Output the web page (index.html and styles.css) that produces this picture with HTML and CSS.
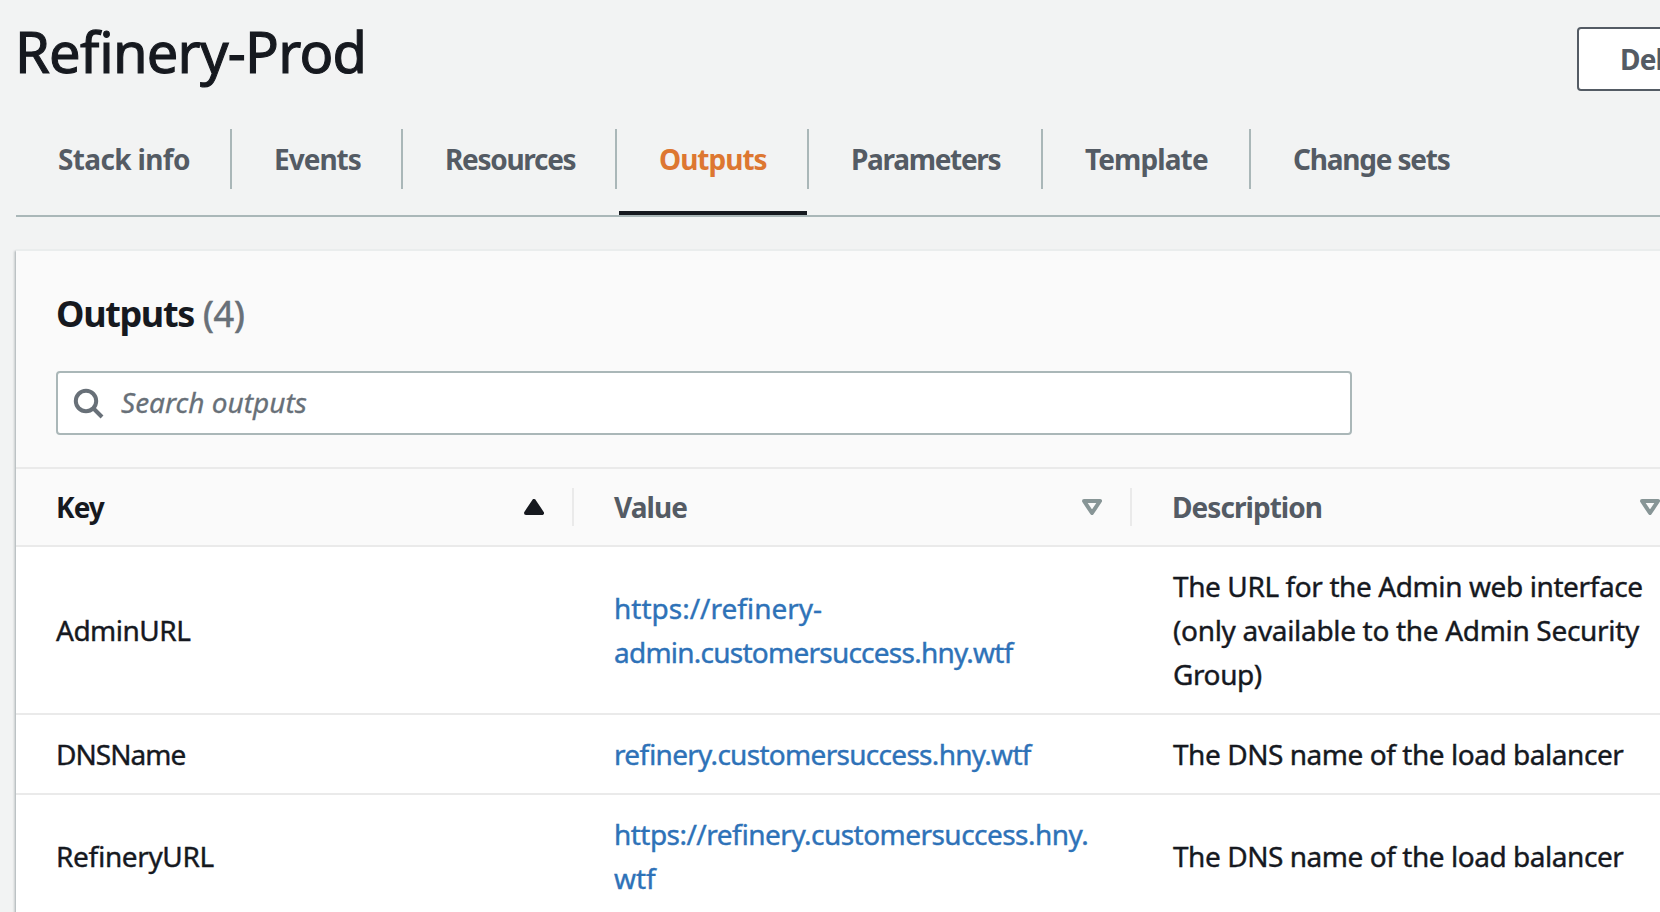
FILE: index.html
```html
<!DOCTYPE html>
<html lang="en">
<head>
<meta charset="utf-8">
<title>Refinery-Prod</title>
<link rel="stylesheet" href="styles.css">
</head>
<body>
<main class="page">
  <header class="page-header">
    <h1 class="title">Refinery-Prod</h1>
    <button class="button">Delete</button>
  </header>
  <nav class="tabs">
    <a class="tab tab-info"><span>Stack info</span></a>
    <a class="tab tab-events"><span>Events</span></a>
    <a class="tab tab-resources"><span>Resources</span></a>
    <a class="tab tab-outputs active"><span>Outputs</span></a>
    <a class="tab tab-parameters"><span>Parameters</span></a>
    <a class="tab tab-template"><span>Template</span></a>
    <a class="tab tab-changes"><span>Change sets</span></a>
  </nav>
  <section class="panel">
    <div class="panel-header">
      <h2 class="heading">Outputs <span class="count">(4)</span></h2>
      <div class="search">
        <svg class="search-icon" width="32" height="32" viewBox="0 0 32 32" fill="none" stroke="#687078" stroke-width="4"><circle cx="13" cy="13" r="10.2"/><path d="M20 20l9 9"/></svg>
        <span class="placeholder">Search outputs</span>
      </div>
    </div>
    <div class="row head">
      <div class="th sorted"><span>Key</span><svg width="20" height="16" viewBox="0 0 20 16"><path d="M10 2L18 14H2z" fill="#16191f" stroke="#16191f" stroke-width="4" stroke-linejoin="round"/></svg></div>
      <div class="th"><span>Value</span><svg width="20" height="16" viewBox="0 0 20 16"><path d="M10 14L18 2H2z" fill="none" stroke="#879596" stroke-width="4" stroke-linejoin="round"/></svg></div>
      <div class="th"><span>Description</span><svg width="20" height="16" viewBox="0 0 20 16"><path d="M10 14L18 2H2z" fill="none" stroke="#879596" stroke-width="4" stroke-linejoin="round"/></svg></div>
    </div>
    <div class="row">
      <div class="td name">AdminURL</div>
      <div class="td link"><a><span class="loose">https://refinery-</span><br><span class="tight">admin.customersuccess.hny.wtf</span></a></div>
      <div class="td">The URL for the Admin web interface<br><span class="wide">(only available to the Admin Security</span><br>Group)</div>
    </div>
    <div class="row">
      <div class="td name-tight">DNSName</div>
      <div class="td link"><a>refinery.customersuccess.hny.wtf</a></div>
      <div class="td balance">The DNS name of the load balancer</div>
    </div>
    <div class="row">
      <div class="td">RefineryURL</div>
      <div class="td link"><a><span class="host">https://refinery.customersuccess.hny.</span><br><span class="loose">wtf</span></a></div>
      <div class="td balance">The DNS name of the load balancer</div>
    </div>
  </section>
</main>
</body>
</html>
```
FILE: styles.css
```css
* { box-sizing: border-box; }
body {
  margin: 0;
  height: 912px;
  overflow: hidden;
  background: #f2f3f3;
  color: #16191f;
  font: 28px/44px "Noto Sans", "Open Sans", sans-serif;
  font-feature-settings: "liga" 1;
}
.page { width: 1780px; padding: 18px 0 0 16px; }
.page-header { display: flex; height: 111px; }
.title {
  width: 1561px;
  margin: 0;
  padding-top: 1px;
  font-size: 56px;
  font-weight: 400;
  line-height: 64px;
  letter-spacing: -0.75px;
  text-indent: -1px;
  -webkit-text-stroke: 1.1px #16191f;
}
.button {
  width: 160px;
  height: 64px;
  margin: 9px 0 0;
  padding: 0 0 0 41px;
  border: 2px solid #545b64;
  border-radius: 4px;
  background: #fff;
  color: #545b64;
  font: 700 28px/58px "Noto Sans", sans-serif;
  letter-spacing: -0.8px;
  text-align: left;
}

/* Tabs */
.tabs { display: flex; height: 88px; border-bottom: 2px solid #aab7b8; }
.tab {
  position: relative;
  flex: none;
  height: 60px;
  padding-left: 42px;
  border-right: 2px solid #aab7b8;
  color: #545b64;
  font-weight: 700;
  line-height: 60px;
  letter-spacing: -1px;
  white-space: nowrap;
}
.tab-info { width: 216px; letter-spacing: -0.65px; }
.tab-events { width: 171px; }
.tab-resources { width: 214px; letter-spacing: -1.3px; }
.tab-outputs { width: 192px; padding-left: 42px; }
.tab-parameters { width: 234px; letter-spacing: -1.3px; }
.tab-template { width: 208px; padding-left: 42px; letter-spacing: -0.9px; }
.tab-changes { width: 220px; border-right: 0; letter-spacing: -1.2px; }
.active { color: #dd7731; }
.active::after {
  content: "";
  position: absolute;
  top: 82px;
  left: 2px;
  right: 0;
  height: 4px;
  background: #16191f;
}

/* Outputs panel */
.panel {
  margin-top: 32px;
  border-top: 2px solid #eaeded;
  background: #fff;
  box-shadow: 0 2px 2px rgba(0, 28, 36, .3), -2px 2px 2px rgba(0, 28, 36, .15);
}
.panel-header {
  height: 218px;
  padding: 41px 40px 0;
  border-bottom: 2px solid #eaeaea;
  background: #fafafa;
}
.heading {
  margin: 0 0 35px;
  font-size: 36px;
  line-height: 44px;
  letter-spacing: -1.35px;
}
.count {
  margin-left: 1px;
  color: #687078;
  font-weight: 400;
  letter-spacing: -0.2px;
  -webkit-text-stroke: 0.6px #687078;
}
.search {
  display: flex;
  align-items: center;
  width: 1296px;
  height: 64px;
  padding-left: 15px;
  border: 2px solid #aab7b8;
  border-radius: 4px;
  background: #fff;
}
.search-icon { flex: none; margin-top: 1px; }
.placeholder {
  padding: 0 0 2px 16px;
  color: #687078;
  font-style: italic;
  -webkit-text-stroke: 0.3px #687078;
}

/* Table */
.row {
  display: grid;
  grid-template-columns: 558px 558px 558px;
  align-items: center;
  padding: 17px 0;
  border-bottom: 2px solid #eaeaea;
}
.head { height: 78px; padding: 0; background: #fafafa; }
.th {
  display: flex;
  align-items: center;
  justify-content: space-between;
  height: 38px;
  padding: 0 28px 0 40px;
  border-right: 2px solid #eaeaea;
  color: #545b64;
  font-weight: 700;
  letter-spacing: -0.95px;
}
.th:last-child { border-right: 0; padding-right: 30px; }
.sorted { color: #16191f; }
.td {
  padding-left: 40px;
  letter-spacing: -0.38px;
  white-space: nowrap;
  -webkit-text-stroke: 0.4px currentColor;
}
.td:last-child { padding-left: 41px; letter-spacing: -0.4px; }
.td.balance { letter-spacing: -0.45px; }
.wide { letter-spacing: -0.32px; }
.name { letter-spacing: -0.5px; }
.name-tight { letter-spacing: -0.95px; }
.link { color: #2e72b8; letter-spacing: -0.7px; }
.loose { letter-spacing: 0; }
.tight { letter-spacing: -0.76px; }
.host { letter-spacing: -0.53px; }
```
